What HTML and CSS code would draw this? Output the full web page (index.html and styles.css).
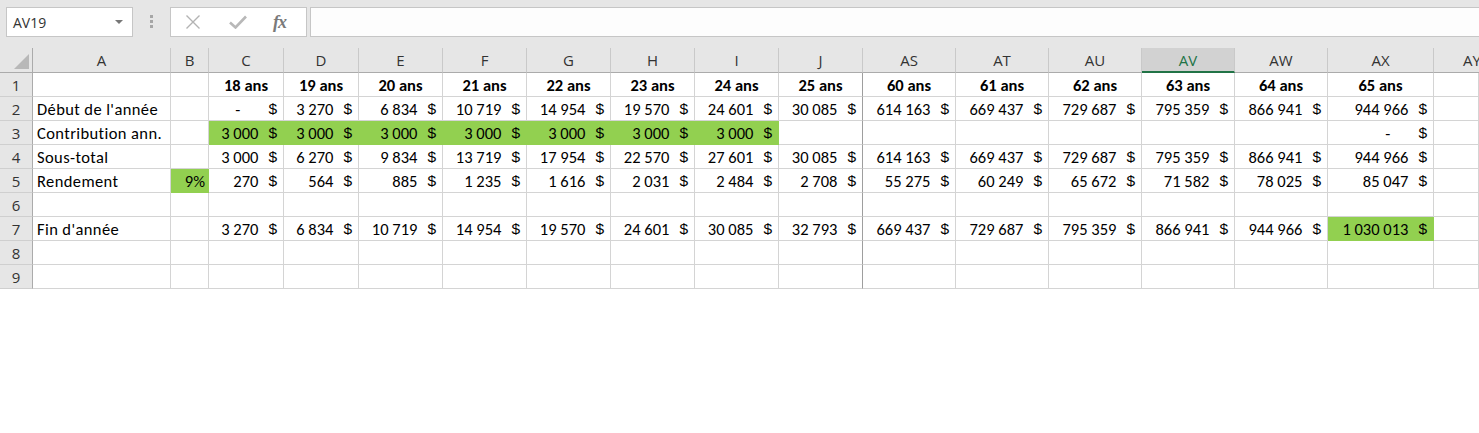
FILE: index.html
```html
<!DOCTYPE html>
<html lang="fr">
<head>
<meta charset="utf-8">
<title>Classeur</title>
<link rel="stylesheet" href="styles.css">
</head>
<body>
<div class="topbar">
  <div class="namebox"><span>AV19</span><span class="caret"></span></div>
  <div class="grip"><i></i><i></i><i></i></div>
  <div class="fxbox">
    <svg class="ico-x" width="16" height="14" viewBox="0 0 16 14"><path d="M1.5 0.5 L14.5 13.5 M14.5 0.5 L1.5 13.5" stroke="#b3b3b3" stroke-width="1.4" fill="none"/></svg>
    <svg class="ico-ok" width="18" height="14" viewBox="0 0 18 14"><path d="M1 7.5 L6.5 12.5 L17 1.5" stroke="#b8b8b8" stroke-width="2.6" fill="none"/></svg>
    <span class="fx">fx</span>
  </div>
  <div class="formula"></div>
</div>

<div class="sheet">
  <!-- header row -->
  <div class="ch corner"><span class="tri"></span></div>
  <div class="ch">A</div><div class="ch">B</div><div class="ch">C</div><div class="ch">D</div><div class="ch">E</div><div class="ch">F</div><div class="ch">G</div><div class="ch">H</div><div class="ch">I</div><div class="ch">J</div><div class="ch">AS</div><div class="ch">AT</div><div class="ch">AU</div><div class="ch sel">AV</div><div class="ch">AW</div><div class="ch">AX</div><div class="ch last">AY</div>

  <!-- row 1 -->
  <div class="rh">1</div>
  <div class="c"></div><div class="c"></div>
  <div class="c h">18 ans</div><div class="c h">19 ans</div><div class="c h">20 ans</div><div class="c h">21 ans</div><div class="c h">22 ans</div><div class="c h">23 ans</div><div class="c h">24 ans</div><div class="c h fz">25 ans</div>
  <div class="c h">60 ans</div><div class="c h">61 ans</div><div class="c h">62 ans</div><div class="c h">63 ans</div><div class="c h">64 ans</div><div class="c h">65 ans</div><div class="c"></div>

  <!-- row 2 -->
  <div class="rh">2</div>
  <div class="c t">Début de l'année</div><div class="c"></div>
  <div class="c n"><span class="z">-</span><i>$</i></div>
  <div class="c n"><span>3 270</span><i>$</i></div>
  <div class="c n"><span>6 834</span><i>$</i></div>
  <div class="c n"><span>10 719</span><i>$</i></div>
  <div class="c n"><span>14 954</span><i>$</i></div>
  <div class="c n"><span>19 570</span><i>$</i></div>
  <div class="c n"><span>24 601</span><i>$</i></div>
  <div class="c n fz"><span>30 085</span><i>$</i></div>
  <div class="c n"><span>614 163</span><i>$</i></div>
  <div class="c n"><span>669 437</span><i>$</i></div>
  <div class="c n"><span>729 687</span><i>$</i></div>
  <div class="c n"><span>795 359</span><i>$</i></div>
  <div class="c n"><span>866 941</span><i>$</i></div>
  <div class="c n"><span>944 966</span><i>$</i></div>
  <div class="c"></div>

  <!-- row 3 -->
  <div class="rh">3</div>
  <div class="c t">Contribution ann.</div><div class="c"></div>
  <div class="c n g"><span>3 000</span><i>$</i></div>
  <div class="c n g"><span>3 000</span><i>$</i></div>
  <div class="c n g"><span>3 000</span><i>$</i></div>
  <div class="c n g"><span>3 000</span><i>$</i></div>
  <div class="c n g"><span>3 000</span><i>$</i></div>
  <div class="c n g"><span>3 000</span><i>$</i></div>
  <div class="c n g"><span>3 000</span><i>$</i></div>
  <div class="c fz"></div>
  <div class="c"></div><div class="c"></div><div class="c"></div><div class="c"></div><div class="c"></div>
  <div class="c n"><span class="z">-</span><i>$</i></div>
  <div class="c"></div>

  <!-- row 4 -->
  <div class="rh">4</div>
  <div class="c t">Sous-total</div><div class="c"></div>
  <div class="c n"><span>3 000</span><i>$</i></div>
  <div class="c n"><span>6 270</span><i>$</i></div>
  <div class="c n"><span>9 834</span><i>$</i></div>
  <div class="c n"><span>13 719</span><i>$</i></div>
  <div class="c n"><span>17 954</span><i>$</i></div>
  <div class="c n"><span>22 570</span><i>$</i></div>
  <div class="c n"><span>27 601</span><i>$</i></div>
  <div class="c n fz"><span>30 085</span><i>$</i></div>
  <div class="c n"><span>614 163</span><i>$</i></div>
  <div class="c n"><span>669 437</span><i>$</i></div>
  <div class="c n"><span>729 687</span><i>$</i></div>
  <div class="c n"><span>795 359</span><i>$</i></div>
  <div class="c n"><span>866 941</span><i>$</i></div>
  <div class="c n"><span>944 966</span><i>$</i></div>
  <div class="c"></div>

  <!-- row 5 -->
  <div class="rh">5</div>
  <div class="c t">Rendement</div><div class="c r g">9%</div>
  <div class="c n"><span>270</span><i>$</i></div>
  <div class="c n"><span>564</span><i>$</i></div>
  <div class="c n"><span>885</span><i>$</i></div>
  <div class="c n"><span>1 235</span><i>$</i></div>
  <div class="c n"><span>1 616</span><i>$</i></div>
  <div class="c n"><span>2 031</span><i>$</i></div>
  <div class="c n"><span>2 484</span><i>$</i></div>
  <div class="c n fz"><span>2 708</span><i>$</i></div>
  <div class="c n"><span>55 275</span><i>$</i></div>
  <div class="c n"><span>60 249</span><i>$</i></div>
  <div class="c n"><span>65 672</span><i>$</i></div>
  <div class="c n"><span>71 582</span><i>$</i></div>
  <div class="c n"><span>78 025</span><i>$</i></div>
  <div class="c n"><span>85 047</span><i>$</i></div>
  <div class="c"></div>

  <!-- row 6 -->
  <div class="rh">6</div>
  <div class="c"></div><div class="c"></div><div class="c"></div><div class="c"></div><div class="c"></div><div class="c"></div><div class="c"></div><div class="c"></div><div class="c"></div><div class="c fz"></div><div class="c"></div><div class="c"></div><div class="c"></div><div class="c"></div><div class="c"></div><div class="c"></div><div class="c"></div>

  <!-- row 7 -->
  <div class="rh">7</div>
  <div class="c t">Fin d'année</div><div class="c"></div>
  <div class="c n"><span>3 270</span><i>$</i></div>
  <div class="c n"><span>6 834</span><i>$</i></div>
  <div class="c n"><span>10 719</span><i>$</i></div>
  <div class="c n"><span>14 954</span><i>$</i></div>
  <div class="c n"><span>19 570</span><i>$</i></div>
  <div class="c n"><span>24 601</span><i>$</i></div>
  <div class="c n"><span>30 085</span><i>$</i></div>
  <div class="c n fz"><span>32 793</span><i>$</i></div>
  <div class="c n"><span>669 437</span><i>$</i></div>
  <div class="c n"><span>729 687</span><i>$</i></div>
  <div class="c n"><span>795 359</span><i>$</i></div>
  <div class="c n"><span>866 941</span><i>$</i></div>
  <div class="c n"><span>944 966</span><i>$</i></div>
  <div class="c n g"><span>1 030 013</span><i>$</i></div>
  <div class="c"></div>

  <!-- row 8 -->
  <div class="rh">8</div>
  <div class="c"></div><div class="c"></div><div class="c"></div><div class="c"></div><div class="c"></div><div class="c"></div><div class="c"></div><div class="c"></div><div class="c"></div><div class="c fz"></div><div class="c"></div><div class="c"></div><div class="c"></div><div class="c"></div><div class="c"></div><div class="c"></div><div class="c"></div>

  <!-- row 9 -->
  <div class="rh">9</div>
  <div class="c"></div><div class="c"></div><div class="c"></div><div class="c"></div><div class="c"></div><div class="c"></div><div class="c"></div><div class="c"></div><div class="c"></div><div class="c fz"></div><div class="c"></div><div class="c"></div><div class="c"></div><div class="c"></div><div class="c"></div><div class="c"></div><div class="c"></div>
</div>
</body>
</html>
```

FILE: styles.css
```css
* { box-sizing: border-box; }
html, body { margin: 0; padding: 0; background: #ffffff; }
body {
  width: 1479px;
  height: 433px;
  overflow: hidden;
  font-family: "Carlito", "Lato", "Liberation Sans", sans-serif;
  color: #000;
}

/* ---------- formula bar ---------- */
.topbar {
  height: 48px;
  background: #e6e6e6;
  display: flex;
  align-items: flex-start;
  padding: 7px 0 0 6px;
  width: 1479px;
}
.namebox {
  width: 127px;
  height: 30px;
  background: #fff;
  border: 1px solid #c6c6c6;
  display: flex;
  align-items: center;
  padding-left: 6px;
  font-family: "Open Sans", "Noto Sans", sans-serif;
  font-size: 14px;
  color: #333;
}
.caret {
  margin-left: auto;
  margin-right: 9px;
  width: 0; height: 0;
  border-left: 4px solid transparent;
  border-right: 4px solid transparent;
  border-top: 4px solid #777;
}
.grip {
  width: 3px;
  margin: 8px 17px 0 17px;
  display: flex;
  flex-direction: column;
  gap: 2px;
}
.grip i { display: block; width: 3px; height: 3px; background: #a6a6a6; }
.fxbox {
  width: 137px;
  height: 30px;
  background: #fff;
  border: 1px solid #c6c6c6;
  display: flex;
  align-items: center;
  padding-left: 14px;
}
.ico-x { margin-right: 28px; }
.ico-ok { margin-right: 26px; }
.fx {
  font-family: "Liberation Serif", "DejaVu Serif", serif;
  font-style: italic;
  font-weight: bold;
  font-size: 18px;
  color: #7a7a7a;
  letter-spacing: -1px;
}
.formula {
  margin-left: 3px;
  flex: 1;
  height: 30px;
  background: #fdfdfd;
  border-top: 1px solid #c6c6c6;
  border-bottom: 1px solid #c6c6c6;
  border-left: 1px solid #c6c6c6;
}

/* ---------- sheet grid ---------- */
.sheet {
  display: grid;
  grid-template-columns: 33px 138px 38px 75px 75px 84px 84px 84px 84px 84px 84px 93px 93px 93px 93px 93px 106px 45px;
  grid-template-rows: 25px repeat(9, 24px);
  width: 1479px;
  overflow: hidden;
}
.ch {
  background: #e6e6e6;
  border-right: 1px solid #c9c9c9;
  border-bottom: 1px solid #ababab;
  display: flex;
  align-items: center;
  justify-content: center;
  font-family: "Open Sans", "Noto Sans", sans-serif;
  font-size: 15px;
  color: #333;
  white-space: nowrap;
}
.ch.last { justify-content: flex-start; padding-left: 29px; border-right: 0; }
.ch.sel {
  background: #d2d2d2;
  color: #217346;
  border-bottom: 2px solid #217346;
}
.corner {
  border-right: 1px solid #ababab;
  position: relative;
}
.tri {
  position: absolute;
  right: 3px;
  bottom: 3px;
  width: 0; height: 0;
  border-left: 15px solid transparent;
  border-bottom: 15px solid #b8b8b8;
}
.rh {
  background: #e6e6e6;
  border-right: 1px solid #ababab;
  border-bottom: 1px solid #cfcfcf;
  display: flex;
  align-items: center;
  justify-content: center;
  font-family: "Open Sans", "Noto Sans", sans-serif;
  font-size: 15px;
  color: #333;
}
.c {
  border-right: 1px solid #d4d4d4;
  border-bottom: 1px solid #d4d4d4;
  display: flex;
  align-items: center;
  font-size: 16.5px;
  white-space: pre;
}
.c.t { padding-left: 4px; letter-spacing: 0.4px; }
.c.h { justify-content: center; font-weight: bold; }
.c.r { justify-content: flex-end; padding-right: 3px; }
.c.n { justify-content: flex-end; padding-right: 6px; }
.c.n i {
  font-style: normal;
  font-family: "Liberation Sans", "Arial", sans-serif;
  font-size: 15.5px;
  margin-left: 10px;
}
.c.n .z { margin-right: 18px; }
.c.g { background: #92d050; border-right-color: #92d050; border-bottom-color: #92d050; }
.c.fz { border-right-color: #9e9e9e; }
```
